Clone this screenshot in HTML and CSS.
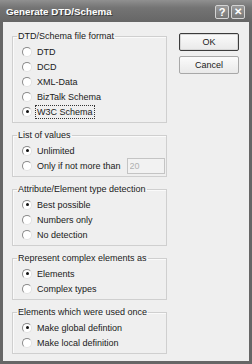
FILE: index.html
```html
<!DOCTYPE html>
<html lang="en">
<head>
  <meta charset="UTF-8">
  <title>Generate DTD/Schema</title>
  <link rel="stylesheet" href="styles.css">
</head>
<body>
  <div class="window">
    <div class="titlebar">
      <span class="title">Generate DTD/Schema</span>
      <div class="caption-btns">
        <span class="cap-btn">?</span>
        <span class="cap-btn close">&#x2715;</span>
      </div>
    </div>

    <div class="dialog">
      <div class="groups">
        <fieldset>
          <legend>DTD/Schema file format</legend>
          <div class="row"><span class="radio"></span>DTD</div>
          <div class="row"><span class="radio"></span>DCD</div>
          <div class="row"><span class="radio"></span>XML-Data</div>
          <div class="row"><span class="radio"></span>BizTalk Schema</div>
          <div class="row"><span class="radio checked"></span><span class="focus">W3C Schema</span></div>
        </fieldset>

        <fieldset>
          <legend>List of values</legend>
          <div class="row"><span class="radio checked"></span>Unlimited</div>
          <div class="row"><span class="radio"></span>Only if not more than <input type="text" class="num" value="20" disabled></div>
        </fieldset>

        <fieldset>
          <legend>Attribute/Element type detection</legend>
          <div class="row"><span class="radio checked"></span>Best possible</div>
          <div class="row"><span class="radio"></span>Numbers only</div>
          <div class="row"><span class="radio"></span>No detection</div>
        </fieldset>

        <fieldset>
          <legend>Represent complex elements as</legend>
          <div class="row"><span class="radio checked"></span>Elements</div>
          <div class="row"><span class="radio"></span>Complex types</div>
        </fieldset>

        <fieldset>
          <legend>Elements which were used once</legend>
          <div class="row"><span class="radio checked"></span>Make global defintion</div>
          <div class="row"><span class="radio"></span>Make local definition</div>
        </fieldset>
      </div>

      <div class="buttons">
        <button class="btn default">OK</button>
        <button class="btn">Cancel</button>
      </div>
    </div>
  </div>
</body>
</html>
```

FILE: styles.css
```css
body {
  margin: 0;
  font-family: "Liberation Sans", Arial, sans-serif;
  font-size: 9px;
  color: #202020;
  background: #ffffff;
}
.window {
  width: 252px;
  height: 364px;
  box-sizing: border-box;
  border: 3px solid #666666;
  border-top: none;
  background: #efefef;
  display: flex;
  flex-direction: column;
}
.titlebar {
  height: 22px;
  margin: 0 -3px;
  padding: 0 6px;
  display: flex;
  align-items: center;
  justify-content: space-between;
  background: linear-gradient(#909090, #747474 35%, #666666);
}
.title {
  color: #ffffff;
  font-weight: bold;
  font-size: 9.8px;
  text-shadow: 1px 1px 0 #3c3c3c;
  margin-top: 1px;
}
.caption-btns {
  display: flex;
  gap: 2px;
  margin-top: 2px;
  margin-right: 1px;
}
.cap-btn {
  width: 14px;
  height: 14px;
  box-sizing: border-box;
  border: 1px solid #d4d4d4;
  border-radius: 2px;
  background: linear-gradient(#9a9a9a, #777777);
  color: #ffffff;
  font-weight: bold;
  font-size: 11px;
  line-height: 12px;
  text-align: center;
}
.cap-btn.close {
  font-size: 10px;
}
.dialog {
  flex: 1;
  display: flex;
  padding: 8px 10px 0 9px;
  gap: 12px;
}
.groups {
  width: 155px;
  display: flex;
  flex-direction: column;
  gap: 6px;
}
fieldset {
  margin: 0;
  padding: 2px 0 3px 0;
  border: 1px solid #cfcfcf;
  box-shadow: inset 1px 1px 0 #fafafa;
}
legend {
  margin-left: 4px;
  padding: 0 1px;
  line-height: 12px;
}
.row {
  display: flex;
  align-items: center;
  height: 15px;
  padding-left: 9px;
  white-space: nowrap;
}
.radio {
  width: 10px;
  height: 10px;
  box-sizing: border-box;
  border-radius: 50%;
  border: 1px solid;
  border-color: #8a8a8a #e2e2e2 #e2e2e2 #8a8a8a;
  background: #ffffff;
  margin-right: 5px;
  display: flex;
  align-items: center;
  justify-content: center;
}
.radio.checked::after {
  content: "";
  width: 3px;
  height: 3px;
  border-radius: 50%;
  background: #111111;
}
.focus {
  outline: 1px dotted #333333;
  outline-offset: 1px;
}
.num {
  width: 38px;
  height: 16px;
  box-sizing: border-box;
  margin: 0 0 0 6px;
  padding: 0 2px;
  border: 1px solid #c4c4c4;
  background: #f2f2f2;
  color: #b0b0b0;
  font-family: inherit;
  font-size: 9px;
}
.buttons {
  display: flex;
  flex-direction: column;
  gap: 5px;
  margin-top: 3px;
}
.btn {
  width: 60px;
  height: 18px;
  padding: 0;
  border: 1px solid #a8a8a8;
  border-radius: 2px;
  background: linear-gradient(#fbfbfb, #e9e9e9);
  font-family: inherit;
  font-size: 9px;
  color: #202020;
}
.btn.default {
  border-color: #3c3c3c;
  box-shadow: inset 0 0 0 1px #d8d8d8;
}
```
